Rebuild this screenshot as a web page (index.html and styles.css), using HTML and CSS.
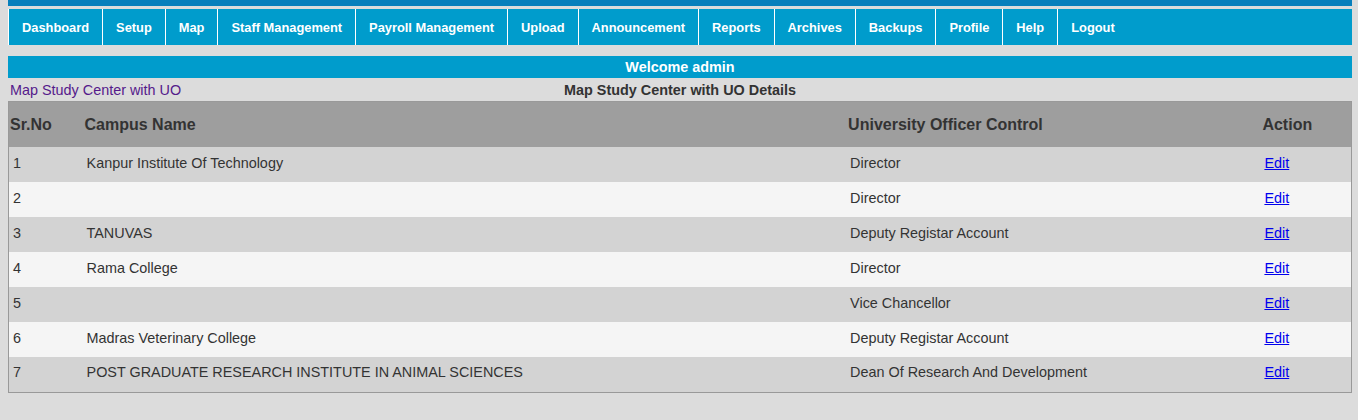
FILE: index.html
```html
<!DOCTYPE html>
<html lang="en">
<head>
<meta charset="utf-8">
<title>Map Study Center with UO</title>
<link rel="stylesheet" href="styles.css">
</head>
<body>
<div class="topstrip"></div>
<nav class="menu">
  <ul>
    <li><a href="#">Dashboard</a></li>
    <li><a href="#">Setup</a></li>
    <li><a href="#">Map</a></li>
    <li><a href="#">Staff Management</a></li>
    <li><a href="#">Payroll Management</a></li>
    <li><a href="#">Upload</a></li>
    <li><a href="#">Announcement</a></li>
    <li><a href="#">Reports</a></li>
    <li><a href="#">Archives</a></li>
    <li><a href="#">Backups</a></li>
    <li><a href="#">Profile</a></li>
    <li><a href="#">Help</a></li>
    <li><a href="#">Logout</a></li>
  </ul>
</nav>
<div class="welcome">Welcome admin</div>
<div class="titlerow">
  <a class="crumb" href="#">Map Study Center with UO</a>
  <div class="title">Map Study Center with UO Details</div>
  <div></div>
</div>
<table class="grid">
  <colgroup>
    <col class="c1"><col class="c2"><col class="c3"><col class="c4">
  </colgroup>
  <thead>
    <tr><th>Sr.No</th><th>Campus Name</th><th>University Officer Control</th><th>Action</th></tr>
  </thead>
  <tbody>
    <tr><td>1</td><td>Kanpur Institute Of Technology</td><td>Director</td><td><a href="#">Edit</a></td></tr>
    <tr><td>2</td><td></td><td>Director</td><td><a href="#">Edit</a></td></tr>
    <tr><td>3</td><td>TANUVAS</td><td>Deputy Registar Account</td><td><a href="#">Edit</a></td></tr>
    <tr><td>4</td><td>Rama College</td><td>Director</td><td><a href="#">Edit</a></td></tr>
    <tr><td>5</td><td></td><td>Vice Chancellor</td><td><a href="#">Edit</a></td></tr>
    <tr><td>6</td><td>Madras Veterinary College</td><td>Deputy Registar Account</td><td><a href="#">Edit</a></td></tr>
    <tr><td>7</td><td>POST GRADUATE RESEARCH INSTITUTE IN ANIMAL SCIENCES</td><td>Dean Of Research And Development</td><td><a href="#">Edit</a></td></tr>
  </tbody>
</table>
</body>
</html>
```
FILE: styles.css
```css
html, body {
  background: #dcdcdc;
}
body {
  margin: 0 6px 0 8px;
  font-family: "Liberation Sans", Arial, sans-serif;
  color: #333;
}
.topstrip {
  height: 6px;
  background: #077fbc;
  margin-bottom: 3px;
}
.menu {
  background: #009ccc;
  height: 36px;
  margin-bottom: 11px;
}
.menu ul {
  list-style: none;
  margin: 0;
  padding: 0;
  display: flex;
  height: 100%;
}
.menu li {
  border-left: 1px solid #ffffff;
  height: 100%;
}
.menu a {
  display: block;
  padding: 1px 13px 0;
  line-height: 35px;
  color: #ffffff;
  font-size: 12.85px;
  font-weight: bold;
  text-decoration: none;
}
.welcome {
  background: #009ccc;
  color: #ffffff;
  font-weight: bold;
  font-size: 14.4px;
  height: 22px;
  line-height: 22px;
  text-align: center;
}
.titlerow {
  display: grid;
  grid-template-columns: 1fr auto 1fr;
  align-items: center;
  height: 23px;
  font-size: 14.4px;
}
.crumb {
  color: #551a8b;
  text-decoration: none;
  padding-left: 2px;
}
.title {
  font-weight: bold;
  color: #333;
}
.grid {
  width: 100%;
  border-collapse: collapse;
  border: 1px solid #999;
  table-layout: fixed;
}
.c1 { width: 75px; }
.c2 { width: 763px; }
.c3 { width: 414px; }
.c4 { width: 90px; }
.grid th {
  background: #9e9e9e;
  color: #333;
  font-size: 16px;
  font-weight: bold;
  text-align: left;
  height: 45px;
  padding: 0 0 0 1px;
}
.grid tbody tr {
  height: 35px;
}
.grid td {
  font-size: 14.4px;
  color: #333;
  padding: 0 0 4px 3px;
}
.grid td:first-child {
  padding-left: 4px;
}
.grid tbody tr:nth-child(odd) td { background: #d3d3d3; }
.grid tbody tr:nth-child(even) td { background: #f5f5f5; }
.grid td a {
  color: #0000ee;
  text-decoration: underline;
}
```
